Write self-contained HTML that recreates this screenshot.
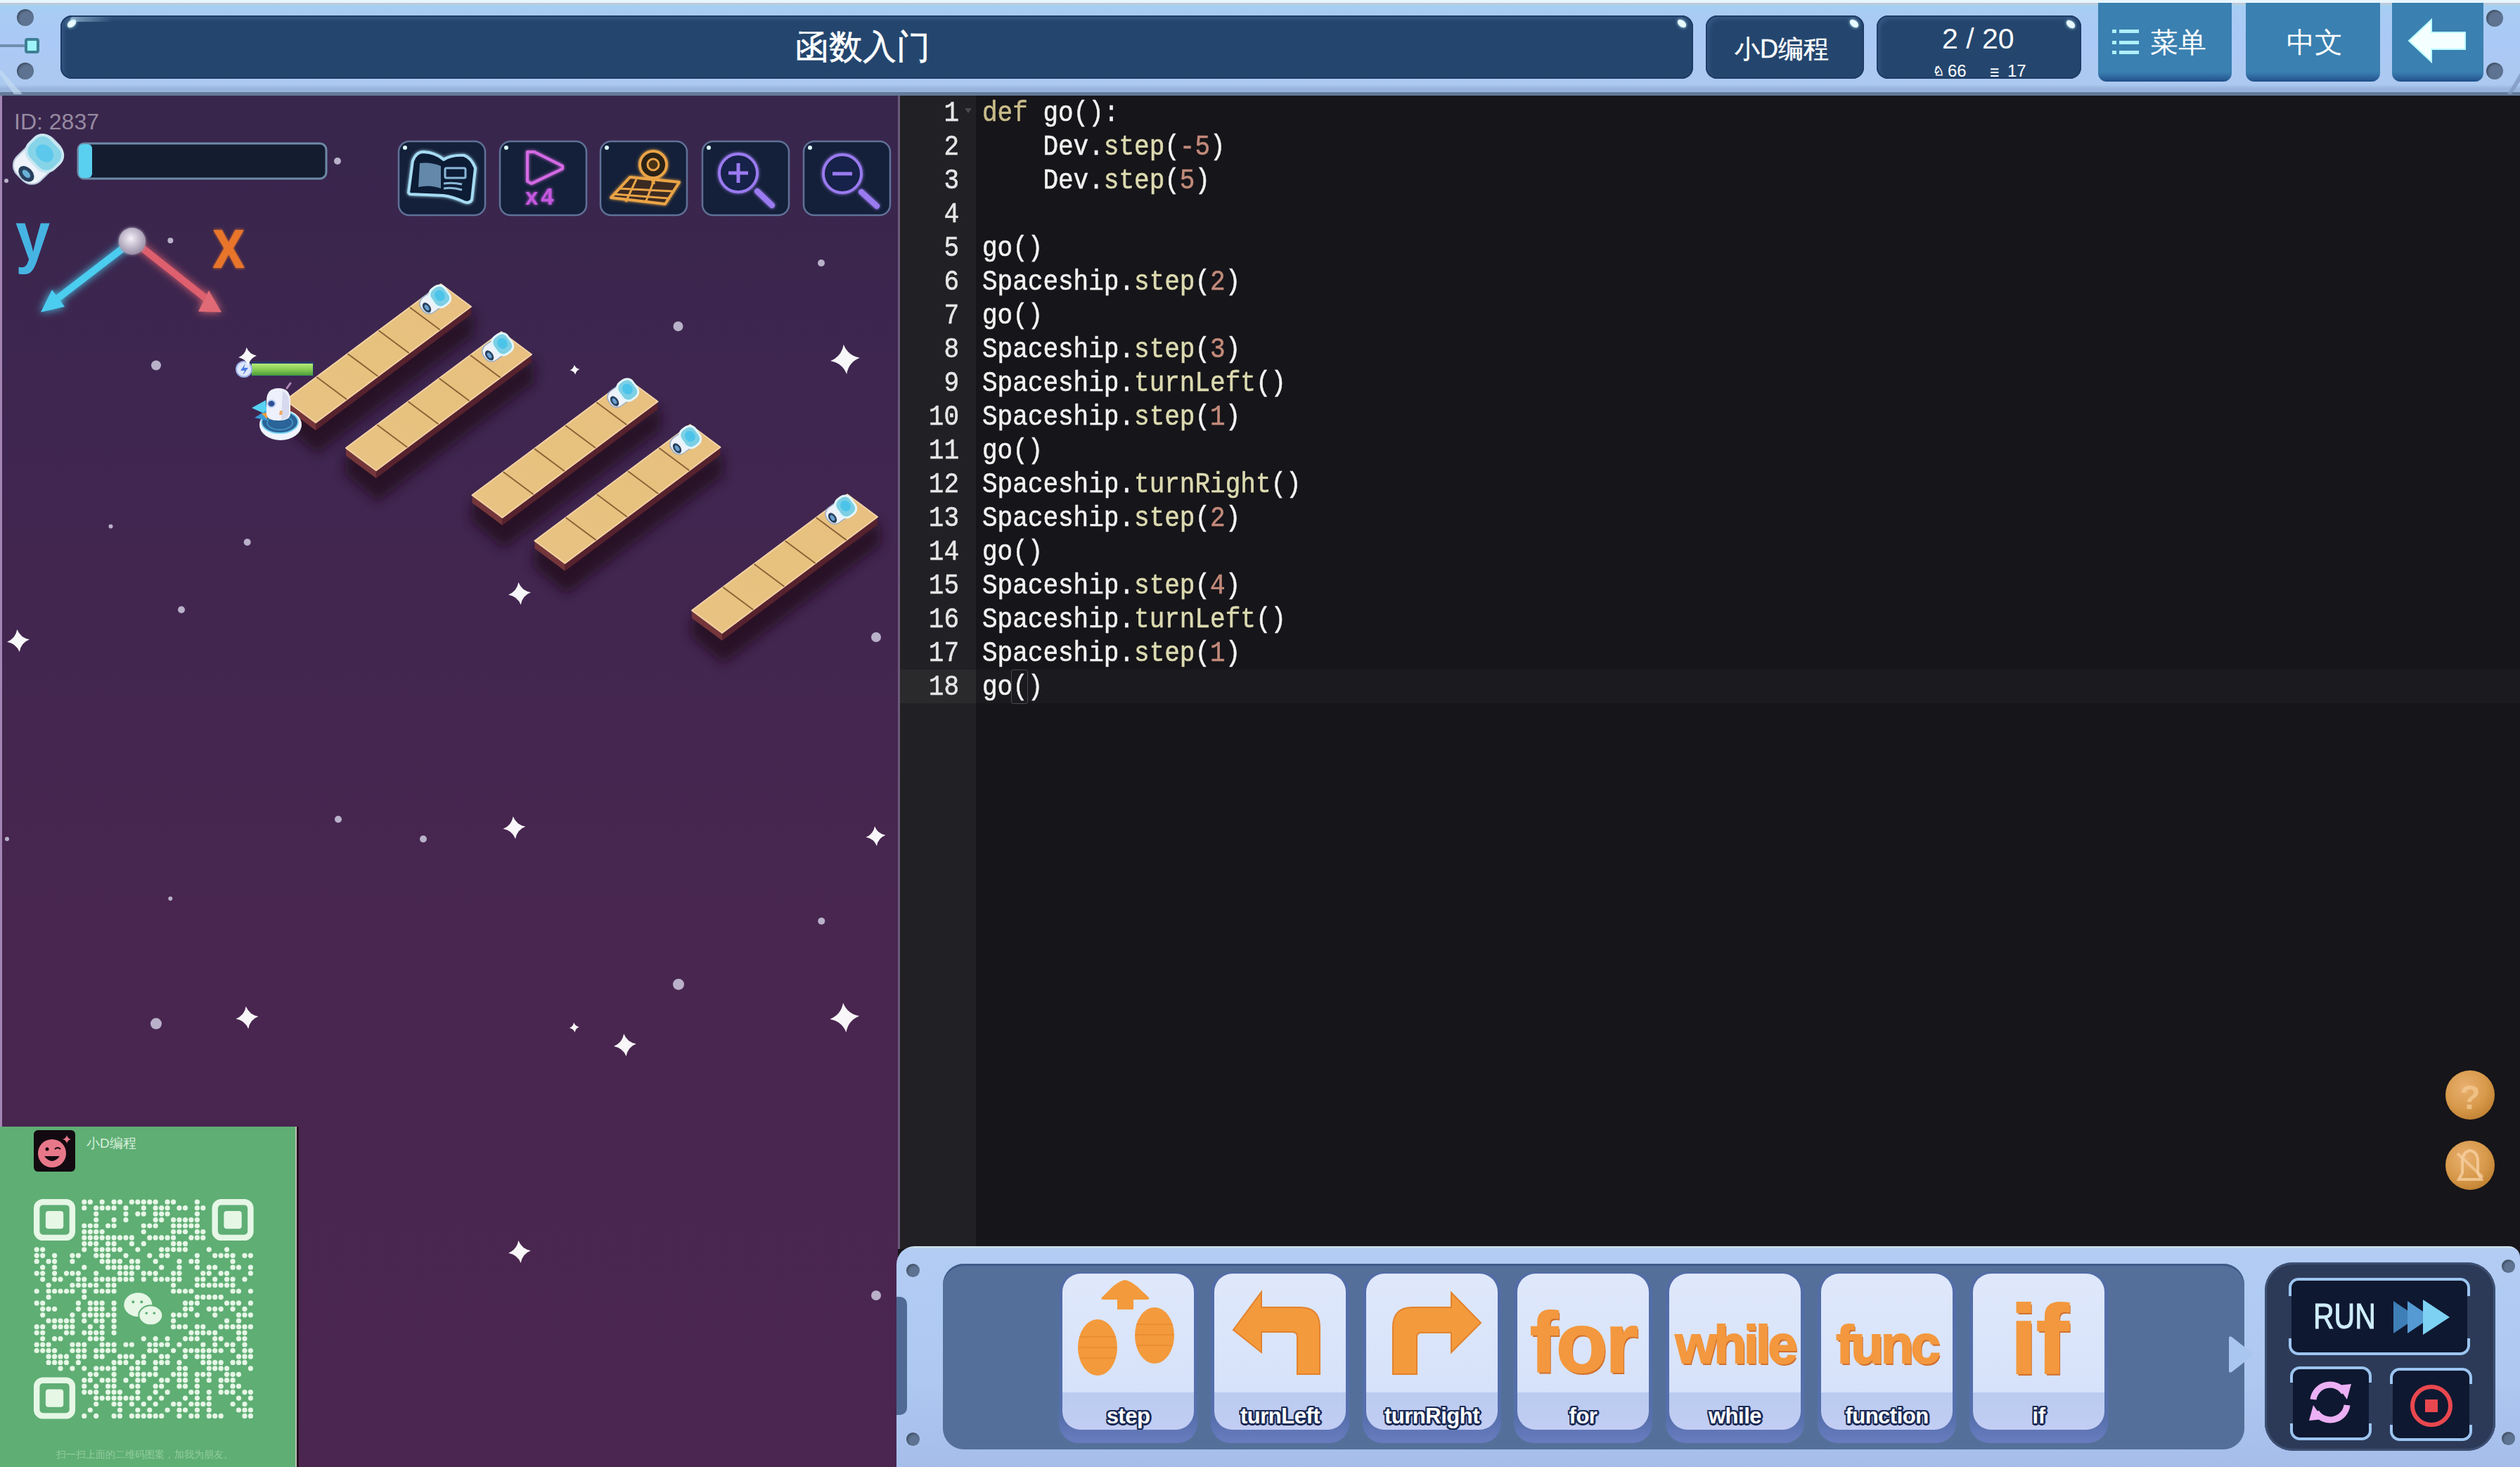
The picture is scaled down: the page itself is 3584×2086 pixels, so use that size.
<!DOCTYPE html>
<html><head><meta charset="utf-8"><title>函数入门</title>
<style>
*{margin:0;padding:0;box-sizing:border-box}
html,body{width:3584px;height:2086px;overflow:hidden;background:#161519;font-family:"Liberation Sans",sans-serif;position:relative}
.a{position:absolute}
/* top bar */
#top{left:0;top:0;width:3584px;height:136px;background:linear-gradient(#e8f6fe 0,#e8f6fe 4px,#bccbd8 4px,#bccbd8 7px,#a4d0f2 7px,#a8ccf4 16px,#abc9f6 60px,#acc9f0 120px,#98b4dc 126px,#98b4dc 131px,#647a98 131px,#647a98 136px)}
.dbox{background:#24466e;border-radius:16px;box-shadow:inset 0 0 0 2px #1f3c66,inset 4px 4px 6px rgba(120,150,220,.25);color:#fff}
.bbtn{background:linear-gradient(#3a80b0 0,#3a80b0 88%,#2a6098 96%,#1e4f88 100%);border-radius:0 0 12px 12px;color:#fff}
.gl{position:absolute;width:14px;height:9px;border-radius:50%;background:#e8fbff;transform:rotate(-40deg);box-shadow:0 0 4px #bfefff}
.dot{border-radius:50%;background:#5d7391;box-shadow:inset 2px 2px 3px rgba(0,0,0,.3)}
/* game */
#game{left:0;top:136px;width:1277px;height:1950px;background:linear-gradient(#38264c 0,#3e2650 400px,#48264f 1200px,#4a2650 1950px);overflow:hidden}
#gutter{left:1277px;top:136px;width:111px;height:1640px;background:#212024;border-left:3px solid #6a5a7a}
#code{left:1388px;top:136px;width:2196px;height:1640px;background:#161519}
.ln{position:absolute;left:1280px;width:84px;text-align:right;font-family:"Liberation Mono",monospace;font-size:36px;line-height:48px;color:#e6e6e6;transform:scaleY(1.15);transform-origin:0 0;-webkit-text-stroke:0.5px #e6e6e6}
.cl{position:absolute;left:1397px;font-family:"Liberation Mono",monospace;font-size:36px;line-height:48px;color:#f2f2f2;white-space:pre;transform:scaleY(1.15);transform-origin:0 0;-webkit-text-stroke:0.5px currentColor}
.k{color:#c9bb8a}.m{color:#dcdab0}.n{color:#c28a7a}
/* toolbar */
#tb{left:1275px;top:1772px;width:2309px;height:314px;background:linear-gradient(#c8dcea 0,#c8dcea 3px,#b2ccf3 3px,#aec8f2 60%,#a6bdea 100%);border-radius:26px 16px 0 0}
#tbin{left:1341px;top:1797px;width:1851px;height:264px;background:#54709a;border-radius:30px;box-shadow:inset 0 3px 0 #3e5a88}
.card{position:absolute;top:1809px;width:197px;height:243px;border-radius:28px;background:linear-gradient(#526ca6 0,#5670ac 85%,#6a7cc0 100%)}
.face{position:absolute;left:5px;top:2px;width:187px;height:222px;border-radius:26px;background:linear-gradient(#dfe8fb 0,#d6e2fa 169px,#b9cbef 169px,#c3cdf4 100%);overflow:hidden}
.lbl{position:absolute;left:0;width:100%;top:183px;text-align:center;font-weight:bold;font-size:31px;line-height:40px;color:#fff;letter-spacing:-0.5px;
 text-shadow:-2px -2px 0 #1a2a55,2px -2px 0 #1a2a55,-2px 2px 0 #1a2a55,2px 2px 0 #1a2a55,0 3px 0 #1a2a55,0 -2px 0 #1a2a55,3px 0 0 #1a2a55,-2px 0 0 #1a2a55}
.big{position:absolute;left:0;width:100%;text-align:center;font-weight:bold;color:#f3983e;text-shadow:2px 3px 0 #d0702e;-webkit-text-stroke:2px #f3983e}
.face svg{position:absolute;left:0;top:0}
.brk{position:absolute;border:4px solid #9cc4f0;border-radius:14px}
.brk .in{position:absolute;left:0;top:0;right:0;bottom:0;background:#0e1830;border-radius:10px}
.gap{position:absolute;background:#2c3a58;width:10px}
@media (max-width:1800px){html{zoom:0.5}}
</style></head><body>

<div id="top" class="a"></div>
<!-- left connector -->
<svg class="a" style="left:0;top:100px" width="40" height="36" viewBox="0 0 40 36"><path d="M0 6 L20 34 L32 34 L0 -2 Z" fill="#c8e0f4" opacity=".6"/></svg>
<div class="a dot" style="left:24px;top:13px;width:24px;height:24px"></div>
<div class="a dot" style="left:24px;top:89px;width:24px;height:24px"></div>
<div class="a" style="left:0;top:63px;width:36px;height:4px;background:#6f8fae"></div>
<div class="a" style="left:35px;top:54px;width:21px;height:22px;border-radius:4px;background:#9ff4fb;border:4px solid #3f7f95"></div>

<div class="a dbox" style="left:86px;top:22px;width:2322px;height:90px"></div><div class="gl" style="left:95px;top:29px"></div><div class="a" style="left:100px;top:24px;width:60px;height:7px;border-radius:4px;background:linear-gradient(90deg,rgba(200,235,255,.55),rgba(200,235,255,0))"></div><div class="gl" style="left:2385px;top:29px;transform:rotate(40deg)"></div>
<div class="a" style="left:1131px;top:37px;font-size:48px;line-height:60px;color:#fff;-webkit-text-stroke:0.6px #fff">函数入门</div>

<div class="a dbox" style="left:2426px;top:22px;width:225px;height:90px"></div><div class="gl" style="left:2630px;top:29px;transform:rotate(40deg)"></div>
<div class="a" style="left:2467px;top:46px;font-size:36px;line-height:48px;color:#fff;-webkit-text-stroke:0.4px #fff">小D编程</div>

<div class="a dbox" style="left:2669px;top:22px;width:291px;height:90px"></div><div class="gl" style="left:2938px;top:30px;transform:rotate(40deg)"></div>
<div class="a" style="left:2762px;top:30px;font-size:41px;line-height:50px;color:#fff">2 / 20</div>
<div class="a" style="left:2749px;top:88px;font-size:18px;line-height:26px;color:#fff;-webkit-text-stroke:0.8px #fff">♘</div><div class="a" style="left:2770px;top:88px;font-size:24px;line-height:26px;color:#fff">66</div>
<div class="a" style="left:2829px;top:90px;font-size:27px;line-height:26px;color:#fff;transform:scaleX(0.85)">≡</div><div class="a" style="left:2855px;top:88px;font-size:24px;line-height:26px;color:#fff">17</div>

<div class="a bbtn" style="left:2984px;top:4px;width:190px;height:112px"></div>
<div class="a" style="left:3004px;top:42px;width:38px;height:36px">
 <div class="a" style="left:0;top:0;width:6px;height:5px;background:#aef0ff"></div><div class="a" style="left:10px;top:0;width:28px;height:5px;background:#aef0ff"></div>
 <div class="a" style="left:0;top:16px;width:6px;height:5px;background:#aef0ff"></div><div class="a" style="left:10px;top:16px;width:28px;height:5px;background:#aef0ff"></div>
 <div class="a" style="left:0;top:30px;width:6px;height:5px;background:#aef0ff"></div><div class="a" style="left:10px;top:30px;width:28px;height:5px;background:#aef0ff"></div>
</div>
<div class="a" style="left:3058px;top:36px;font-size:40px;line-height:48px;color:#fff">菜单</div>

<div class="a bbtn" style="left:3194px;top:4px;width:191px;height:112px"></div>
<div class="a" style="left:3252px;top:36px;font-size:40px;line-height:48px;color:#fff">中文</div>

<div class="a bbtn" style="left:3402px;top:4px;width:130px;height:112px"></div>
<svg class="a" style="left:3420px;top:24px" width="96" height="70" viewBox="0 0 96 70"><path d="M6 34 L38 4 L38 22 L86 22 L86 46 L38 46 L38 64 Z" fill="#f4ffff" stroke="#bff" stroke-width="2"/></svg>
<svg class="a" style="left:3560px;top:100px" width="24" height="36" viewBox="0 0 24 36"><path d="M24 4 L6 34 L12 34 L24 16 Z" fill="#7f98c0" opacity=".8"/></svg>
<div class="a dot" style="left:3536px;top:14px;width:24px;height:24px"></div>
<div class="a dot" style="left:3536px;top:89px;width:24px;height:24px"></div>

<!-- game panel -->
<svg class="a" style="left:0;top:136px" width="1277" height="1950" viewBox="0 136 1277 1950">
<defs>
<linearGradient id="bgp" x1="0" y1="0" x2="0" y2="1"><stop offset="0" stop-color="#38264c"/><stop offset=".25" stop-color="#3f2650"/><stop offset=".6" stop-color="#48264f"/><stop offset="1" stop-color="#4a2650"/></linearGradient>
<linearGradient id="tile" x1="0" y1="1" x2="1" y2="0"><stop offset="0" stop-color="#e8c282"/><stop offset=".5" stop-color="#e6c27e"/><stop offset="1" stop-color="#e9bf80"/></linearGradient>
<filter id="blur8" x="-50%" y="-50%" width="200%" height="200%"><feGaussianBlur stdDeviation="8"/></filter>
<filter id="glow" x="-50%" y="-50%" width="200%" height="200%"><feGaussianBlur stdDeviation="6" result="b"/><feMerge><feMergeNode in="b"/><feMergeNode in="SourceGraphic"/></feMerge></filter>
<filter id="glow2" x="-50%" y="-50%" width="200%" height="200%"><feGaussianBlur stdDeviation="2" result="b"/><feMerge><feMergeNode in="b"/><feMergeNode in="SourceGraphic"/></feMerge></filter>
<radialGradient id="ball" cx=".45" cy=".4" r=".6"><stop offset="0" stop-color="#f4f0f8"/><stop offset="1" stop-color="#9a90a8"/></radialGradient>
<linearGradient id="hp" x1="0" y1="0" x2="0" y2="1"><stop offset="0" stop-color="#b4ea78"/><stop offset=".5" stop-color="#86cc52"/><stop offset="1" stop-color="#4a9a3e"/></linearGradient>
</defs>
<rect x="0" y="136" width="1277" height="1950" fill="url(#bgp)"/>
<rect x="0" y="136" width="3" height="1466" fill="#a486b4"/>
<circle cx="1168" cy="374" r="5" fill="#b9b1c9"/>
<circle cx="964.5" cy="464" r="7" fill="#b9b1c9"/>
<circle cx="222" cy="519.5" r="7" fill="#b9b1c9"/>
<circle cx="242.4" cy="342" r="4" fill="#b9b1c9"/>
<circle cx="157.5" cy="748.6" r="3" fill="#b9b1c9"/>
<circle cx="351.7" cy="771" r="5" fill="#b9b1c9"/>
<circle cx="258" cy="867" r="5" fill="#b9b1c9"/>
<circle cx="1246" cy="906" r="7" fill="#b9b1c9"/>
<circle cx="480" cy="229" r="5" fill="#b9b1c9"/>
<circle cx="481" cy="1165" r="5" fill="#b9b1c9"/>
<circle cx="602" cy="1193" r="5" fill="#b9b1c9"/>
<circle cx="10" cy="1193" r="3" fill="#b9b1c9"/>
<circle cx="242.3" cy="1277.8" r="3" fill="#b9b1c9"/>
<circle cx="1168.3" cy="1309.8" r="5" fill="#b9b1c9"/>
<circle cx="965" cy="1399.7" r="8" fill="#b9b1c9"/>
<circle cx="222" cy="1455.6" r="8" fill="#b9b1c9"/>
<circle cx="1246" cy="1842" r="7" fill="#b9b1c9"/>
<circle cx="9" cy="257" r="3" fill="#b9b1c9"/>
<path transform="rotate(-6 1202 511)" d="M1202 490 Q1206.62 506.38 1223 511 Q1206.62 515.62 1202 532 Q1197.38 515.62 1181 511 Q1197.38 506.38 1202 490Z" fill="#fff" fill-opacity=".96"/>
<path transform="rotate(-6 739 844)" d="M739 828 Q742.52 840.48 755 844 Q742.52 847.52 739 860 Q735.48 847.52 723 844 Q735.48 840.48 739 828Z" fill="#fff" fill-opacity=".96"/>
<path transform="rotate(-6 26 911)" d="M26 895 Q29.52 907.48 42 911 Q29.52 914.52 26 927 Q22.48 914.52 10 911 Q22.48 907.48 26 895Z" fill="#fff" fill-opacity=".96"/>
<path transform="rotate(-6 731.4 1176.8)" d="M731.4 1160.8 Q734.92 1173.28 747.4 1176.8 Q734.92 1180.32 731.4 1192.8 Q727.88 1180.32 715.4 1176.8 Q727.88 1173.28 731.4 1160.8Z" fill="#fff" fill-opacity=".96"/>
<path transform="rotate(-6 1245.5 1189)" d="M1245.5 1175 Q1248.58 1185.92 1259.5 1189 Q1248.58 1192.08 1245.5 1203 Q1242.42 1192.08 1231.5 1189 Q1242.42 1185.92 1245.5 1175Z" fill="#fff" fill-opacity=".96"/>
<path transform="rotate(-6 351.5 1447)" d="M351.5 1431 Q355.02 1443.48 367.5 1447 Q355.02 1450.52 351.5 1463 Q347.98 1450.52 335.5 1447 Q347.98 1443.48 351.5 1431Z" fill="#fff" fill-opacity=".96"/>
<path transform="rotate(-6 1201.3 1447)" d="M1201.3 1426 Q1205.9199999999998 1442.38 1222.3 1447 Q1205.9199999999998 1451.62 1201.3 1468 Q1196.68 1451.62 1180.3 1447 Q1196.68 1442.38 1201.3 1426Z" fill="#fff" fill-opacity=".96"/>
<path transform="rotate(-6 888.9 1486)" d="M888.9 1470 Q892.42 1482.48 904.9 1486 Q892.42 1489.52 888.9 1502 Q885.38 1489.52 872.9 1486 Q885.38 1482.48 888.9 1470Z" fill="#fff" fill-opacity=".96"/>
<path transform="rotate(-6 739 1780)" d="M739 1764 Q742.52 1776.48 755 1780 Q742.52 1783.52 739 1796 Q735.48 1783.52 723 1780 Q735.48 1776.48 739 1764Z" fill="#fff" fill-opacity=".96"/>
<path transform="rotate(-6 817.5 525.7)" d="M817.5 518.7 Q819.04 524.1600000000001 824.5 525.7 Q819.04 527.24 817.5 532.7 Q815.96 527.24 810.5 525.7 Q815.96 524.1600000000001 817.5 518.7Z" fill="#fff" fill-opacity=".96"/>
<path transform="rotate(-6 816.8 1461)" d="M816.8 1454 Q818.3399999999999 1459.46 823.8 1461 Q818.3399999999999 1462.54 816.8 1468 Q815.26 1462.54 809.8 1461 Q815.26 1459.46 816.8 1454Z" fill="#fff" fill-opacity=".96"/>
<text x="20" y="184" font-family="Liberation Sans" font-size="32" fill="#978aa2">ID: 2837</text>
<rect x="111" y="204" width="353" height="50" rx="9" fill="#141c30" stroke="#6d8aa6" stroke-width="3"/>
<rect x="112" y="205" width="19" height="48" rx="6" fill="#5ad0f0"/>
<g transform="translate(54,227) rotate(-44)">
<rect x="-36" y="-24" width="72" height="48" rx="18" fill="#eef2fa" stroke="#b8c8dc" stroke-width="2"/>
<rect x="-8" y="-25" width="42" height="50" rx="16" fill="#86d4e8" stroke="#c8e6f0" stroke-width="4"/><ellipse cx="13" cy="0" rx="11" ry="14" fill="#5cc8ec"/>
<ellipse cx="-26" cy="3" rx="9" ry="13" fill="#28405e"/><ellipse cx="-26" cy="3" rx="4" ry="7" fill="#6ab0d8"/>
</g>
<rect x="567" y="201" width="123" height="105" rx="15" fill="#142039" stroke="#5f7197" stroke-width="2.5"/>
<circle cx="576" cy="210" r="3" fill="#dff"/>
<rect x="711" y="201" width="123" height="105" rx="15" fill="#142039" stroke="#5f7197" stroke-width="2.5"/>
<circle cx="720" cy="210" r="3" fill="#dff"/>
<rect x="854" y="201" width="123" height="105" rx="15" fill="#142039" stroke="#5f7197" stroke-width="2.5"/>
<circle cx="863" cy="210" r="3" fill="#dff"/>
<rect x="999" y="201" width="123" height="105" rx="15" fill="#142039" stroke="#5f7197" stroke-width="2.5"/>
<circle cx="1008" cy="210" r="3" fill="#dff"/>
<rect x="1143" y="201" width="123" height="105" rx="15" fill="#142039" stroke="#5f7197" stroke-width="2.5"/>
<circle cx="1152" cy="210" r="3" fill="#dff"/>
<g filter="url(#glow2)"><path d="M581 274 L587 229 Q592 216 602 216 Q620 217 631 227 Q642 220 660 221 Q670 224 676 239 L671 284 Q668 290 660 287 Q645 280 631 278 L583 276 Z" fill="#0e1a34" stroke="#a6dcf4" stroke-width="4" stroke-linejoin="round"/>
<path d="M597 232 Q612 230 627 236 L627 268 Q612 262 595 266 Z" fill="#6488aa"/>
<rect x="633" y="239" width="29" height="14" rx="2" fill="none" stroke="#8ab8d8" stroke-width="3"/>
<path d="M631 261 Q644 259 657 262 M631 268 Q644 266 657 270" stroke="#8ab8d8" stroke-width="3" fill="none"/></g>
<g filter="url(#glow2)"><path d="M750 216 L760 216 L800 236 L800 240 L756 261 L750 258 Z" fill="none" stroke="#d66ae6" stroke-width="4" stroke-linejoin="round"/>
<text x="747" y="291" font-family="Liberation Sans" font-weight="bold" font-size="33" letter-spacing="4" fill="#c558e0">x4</text></g>
<g filter="url(#glow2)"><path d="M869 281 L896 252 L966 259 L946 290 Z" fill="#3a2a20" stroke="#eaa446" stroke-width="4" stroke-linejoin="round"/>
<path d="M880 268 L957 272 M873 276 L950 282 M905 255 L890 287 M930 257 L918 288" stroke="#eaa446" stroke-width="3"/>
<circle cx="929" cy="234" r="19" fill="#2a2018" stroke="#eaa446" stroke-width="4"/><circle cx="929" cy="234" r="8" fill="#4a3018" stroke="#eaa446" stroke-width="3"/>
<path d="M929 253 L929 262" stroke="#eaa446" stroke-width="5"/></g>
<g filter="url(#glow2)" stroke="#9a7af0" fill="none"><circle cx="1050" cy="246" r="27" stroke-width="4" fill="#18204a"/><path d="M1036 246 H1064 M1050 232 V260" stroke-width="5"/><path d="M1077 272 L1098 292" stroke-width="8" stroke-linecap="round"/>
<circle cx="1198" cy="247" r="27" stroke-width="4" fill="#18204a"/><path d="M1184 247 H1212" stroke-width="5"/><path d="M1225 273 L1247 293" stroke-width="8" stroke-linecap="round"/></g>
<g filter="url(#glow)"><path d="M189 342 L72 432" stroke="#4ccdf0" stroke-width="10"/><path d="M58 444 L74 412 L92 436 Z" fill="#4ccdf0"/>
<path d="M194 346 L300 430" stroke="#de5f6e" stroke-width="10"/><path d="M315 444 L282 443 L297 413 Z" fill="#e06a74"/></g>
<circle cx="188" cy="343" r="19" fill="url(#ball)" filter="url(#glow2)"/>
<text transform="translate(22,370) scale(0.9,1)" font-family="Liberation Sans" font-weight="bold" font-size="98" fill="#46b4e2">y</text>
<text transform="translate(302,381) scale(0.82,1)" font-family="Liberation Sans" font-weight="bold" font-size="102" fill="#e8742c" filter="url(#glow2)">x</text>
<polygon points="406.0,579.0 674.0,442.0 674.0,476.0 451.0,645.0 404.0,605.0" fill="#240a1a" opacity=".8" filter="url(#blur8)"/>
<polygon points="406.0,569.0 449.0,601.0 449.0,612.0 406.0,580.0" fill="#74363a"/>
<polygon points="449.0,601.0 670.0,436.0 670.0,447.0 449.0,612.0" fill="#56222e"/>
<polygon points="406.0,569.0 627.0,404.0 670.0,436.0 449.0,601.0" fill="url(#tile)" stroke="#f3d3a6" stroke-width="2" stroke-linejoin="round"/>
<line x1="450.2" y1="536.0" x2="493.2" y2="568.0" stroke="#8a6236" stroke-width="2"/>
<line x1="494.4" y1="503.0" x2="537.4" y2="535.0" stroke="#8a6236" stroke-width="2"/>
<line x1="538.6" y1="470.0" x2="581.6" y2="502.0" stroke="#8a6236" stroke-width="2"/>
<line x1="582.8" y1="437.0" x2="625.8" y2="469.0" stroke="#8a6236" stroke-width="2"/>
<polygon points="492.0,647.0 760.0,510.0 760.0,544.0 537.0,713.0 490.0,673.0" fill="#240a1a" opacity=".8" filter="url(#blur8)"/>
<polygon points="492.0,637.0 535.0,669.0 535.0,680.0 492.0,648.0" fill="#74363a"/>
<polygon points="535.0,669.0 756.0,504.0 756.0,515.0 535.0,680.0" fill="#56222e"/>
<polygon points="492.0,637.0 713.0,472.0 756.0,504.0 535.0,669.0" fill="url(#tile)" stroke="#f3d3a6" stroke-width="2" stroke-linejoin="round"/>
<line x1="536.2" y1="604.0" x2="579.2" y2="636.0" stroke="#8a6236" stroke-width="2"/>
<line x1="580.4" y1="571.0" x2="623.4" y2="603.0" stroke="#8a6236" stroke-width="2"/>
<line x1="624.6" y1="538.0" x2="667.6" y2="570.0" stroke="#8a6236" stroke-width="2"/>
<line x1="668.8" y1="505.0" x2="711.8" y2="537.0" stroke="#8a6236" stroke-width="2"/>
<polygon points="671.5,714.0 939.5,577.0 939.5,611.0 716.5,780.0 669.5,740.0" fill="#240a1a" opacity=".8" filter="url(#blur8)"/>
<polygon points="671.5,704.0 714.5,736.0 714.5,747.0 671.5,715.0" fill="#74363a"/>
<polygon points="714.5,736.0 935.5,571.0 935.5,582.0 714.5,747.0" fill="#56222e"/>
<polygon points="671.5,704.0 892.5,539.0 935.5,571.0 714.5,736.0" fill="url(#tile)" stroke="#f3d3a6" stroke-width="2" stroke-linejoin="round"/>
<line x1="715.7" y1="671.0" x2="758.7" y2="703.0" stroke="#8a6236" stroke-width="2"/>
<line x1="759.9" y1="638.0" x2="802.9" y2="670.0" stroke="#8a6236" stroke-width="2"/>
<line x1="804.1" y1="605.0" x2="847.1" y2="637.0" stroke="#8a6236" stroke-width="2"/>
<line x1="848.3" y1="572.0" x2="891.3" y2="604.0" stroke="#8a6236" stroke-width="2"/>
<polygon points="760.5,779.0 1028.5,642.0 1028.5,676.0 805.5,845.0 758.5,805.0" fill="#240a1a" opacity=".8" filter="url(#blur8)"/>
<polygon points="760.5,769.0 803.5,801.0 803.5,812.0 760.5,780.0" fill="#74363a"/>
<polygon points="803.5,801.0 1024.5,636.0 1024.5,647.0 803.5,812.0" fill="#56222e"/>
<polygon points="760.5,769.0 981.5,604.0 1024.5,636.0 803.5,801.0" fill="url(#tile)" stroke="#f3d3a6" stroke-width="2" stroke-linejoin="round"/>
<line x1="804.7" y1="736.0" x2="847.7" y2="768.0" stroke="#8a6236" stroke-width="2"/>
<line x1="848.9" y1="703.0" x2="891.9" y2="735.0" stroke="#8a6236" stroke-width="2"/>
<line x1="893.1" y1="670.0" x2="936.1" y2="702.0" stroke="#8a6236" stroke-width="2"/>
<line x1="937.3" y1="637.0" x2="980.3" y2="669.0" stroke="#8a6236" stroke-width="2"/>
<polygon points="984.0,878.0 1252.0,741.0 1252.0,775.0 1029.0,944.0 982.0,904.0" fill="#240a1a" opacity=".8" filter="url(#blur8)"/>
<polygon points="984.0,868.0 1027.0,900.0 1027.0,911.0 984.0,879.0" fill="#74363a"/>
<polygon points="1027.0,900.0 1248.0,735.0 1248.0,746.0 1027.0,911.0" fill="#56222e"/>
<polygon points="984.0,868.0 1205.0,703.0 1248.0,735.0 1027.0,900.0" fill="url(#tile)" stroke="#f3d3a6" stroke-width="2" stroke-linejoin="round"/>
<line x1="1028.2" y1="835.0" x2="1071.2" y2="867.0" stroke="#8a6236" stroke-width="2"/>
<line x1="1072.4" y1="802.0" x2="1115.4" y2="834.0" stroke="#8a6236" stroke-width="2"/>
<line x1="1116.6" y1="769.0" x2="1159.6" y2="801.0" stroke="#8a6236" stroke-width="2"/>
<line x1="1160.8" y1="736.0" x2="1203.8" y2="768.0" stroke="#8a6236" stroke-width="2"/>
<g transform="translate(618,427) rotate(-36)">
<rect x="-22" y="-13" width="44" height="26" rx="11" fill="#eef2fa" stroke="#9ab0c8" stroke-width="1.5"/>
<rect x="-3" y="-15" width="25" height="30" rx="10" fill="#7ccfe4" stroke="#e2f6fb" stroke-width="3"/><ellipse cx="10" cy="-1" rx="7" ry="8" fill="#4cc4ea"/>
<ellipse cx="-15" cy="2" rx="5" ry="8" fill="#28405e"/><ellipse cx="-15" cy="2" rx="2.5" ry="4.5" fill="#6aa0d0"/>
</g>
<g transform="translate(707,495) rotate(-36)">
<rect x="-22" y="-13" width="44" height="26" rx="11" fill="#eef2fa" stroke="#9ab0c8" stroke-width="1.5"/>
<rect x="-3" y="-15" width="25" height="30" rx="10" fill="#7ccfe4" stroke="#e2f6fb" stroke-width="3"/><ellipse cx="10" cy="-1" rx="7" ry="8" fill="#4cc4ea"/>
<ellipse cx="-15" cy="2" rx="5" ry="8" fill="#28405e"/><ellipse cx="-15" cy="2" rx="2.5" ry="4.5" fill="#6aa0d0"/>
</g>
<g transform="translate(885,560) rotate(-36)">
<rect x="-22" y="-13" width="44" height="26" rx="11" fill="#eef2fa" stroke="#9ab0c8" stroke-width="1.5"/>
<rect x="-3" y="-15" width="25" height="30" rx="10" fill="#7ccfe4" stroke="#e2f6fb" stroke-width="3"/><ellipse cx="10" cy="-1" rx="7" ry="8" fill="#4cc4ea"/>
<ellipse cx="-15" cy="2" rx="5" ry="8" fill="#28405e"/><ellipse cx="-15" cy="2" rx="2.5" ry="4.5" fill="#6aa0d0"/>
</g>
<g transform="translate(974,627) rotate(-36)">
<rect x="-22" y="-13" width="44" height="26" rx="11" fill="#eef2fa" stroke="#9ab0c8" stroke-width="1.5"/>
<rect x="-3" y="-15" width="25" height="30" rx="10" fill="#7ccfe4" stroke="#e2f6fb" stroke-width="3"/><ellipse cx="10" cy="-1" rx="7" ry="8" fill="#4cc4ea"/>
<ellipse cx="-15" cy="2" rx="5" ry="8" fill="#28405e"/><ellipse cx="-15" cy="2" rx="2.5" ry="4.5" fill="#6aa0d0"/>
</g>
<g transform="translate(1195,726) rotate(-36)">
<rect x="-22" y="-13" width="44" height="26" rx="11" fill="#eef2fa" stroke="#9ab0c8" stroke-width="1.5"/>
<rect x="-3" y="-15" width="25" height="30" rx="10" fill="#7ccfe4" stroke="#e2f6fb" stroke-width="3"/><ellipse cx="10" cy="-1" rx="7" ry="8" fill="#4cc4ea"/>
<ellipse cx="-15" cy="2" rx="5" ry="8" fill="#28405e"/><ellipse cx="-15" cy="2" rx="2.5" ry="4.5" fill="#6aa0d0"/>
</g>
<g>
<ellipse cx="399" cy="604" rx="30" ry="22" fill="#f0f4ff"/>
<ellipse cx="398" cy="600" rx="26" ry="16" fill="#2a6498" stroke="#7ad4f4" stroke-width="2"/>
<ellipse cx="398" cy="601" rx="18" ry="10" fill="none" stroke="#5ab0e0" stroke-width="1.5" opacity=".7"/>
<path d="M358 580 L378 569 L380 590 Z" fill="#58d2f2"/><path d="M362 594 L378 584 L380 598 Z" fill="#3a9ad8"/>
<path d="M372 588 L382 586 L380 596 Z" fill="#e8a040"/>
<path d="M379 570 Q379 552 396 552 Q413 552 413 570 L413 588 Q413 598 396 598 Q379 598 379 588 Z" fill="#eef0fb"/>
<path d="M402 556 Q411 560 411 572 L411 588 Q409 596 400 597 Z" fill="#c8cce8" opacity=".6"/>
<ellipse cx="386" cy="574" rx="5.5" ry="5" fill="#2f4f96" stroke="#b6d0f4" stroke-width="2"/>
<path d="M398 584 L402 584 L401 590 L397 590 Z" fill="#f0a860"/>
<path d="M408 552 L413 545" stroke="#b08ab8" stroke-width="3" stroke-linecap="round"/>
</g>
<rect x="357" y="514" width="89" height="21" fill="#2a3a6a"/><rect x="358" y="517" width="87" height="17" fill="url(#hp)"/>
<circle cx="347" cy="525" r="11" fill="#dfe6fb" stroke="#9ab0e8" stroke-width="2"/><path d="M349 517 L342 527 L348 527 L345 534 L353 523 L347 523 Z" fill="#4a7ae0"/>
<path transform="rotate(-6 352 507)" d="M352 494 Q354.86 504.14 365 507 Q354.86 509.86 352 520 Q349.14 509.86 339 507 Q349.14 504.14 352 494Z" fill="#fff" fill-opacity=".96"/>
</svg>
<div class="a" style="left:0;top:1602px;width:422px;height:484px;background:#5fae74;border-right:2px solid #b8c0b8"></div>
<div class="a" style="left:422px;top:1602px;width:3px;height:484px;background:#2a1020"></div>
<svg class="a" style="left:0;top:1602px" width="422" height="484" viewBox="0 1602 422 484">
<rect x="48" y="1607" width="59" height="59" rx="6" fill="#120a10"/><circle cx="74" cy="1640" r="20" fill="#e7788a"/><path d="M63 1644 Q74 1658 85 1644 Z" fill="#120a10"/><circle cx="67" cy="1634" r="2.5" fill="#120a10"/><path d="M78 1634 Q82 1630 86 1634" stroke="#120a10" stroke-width="2" fill="none"/><path d="M95 1614 Q96 1619 101 1620 Q96 1621 95 1626 Q94 1621 89 1620 Q94 1619 95 1614Z" fill="#e7788a"/>
<text x="123" y="1632" font-family="Liberation Sans" font-size="19" fill="#d8efdc">小D编程</text>
<rect x="52.2" y="1709.2" width="50.7" height="50.7" rx="9" fill="none" stroke="#e6f7e6" stroke-width="8.4"/><rect x="64.9" y="1721.9" width="25.3" height="25.3" rx="4" fill="#e6f7e6"/>
<rect x="305.7" y="1709.2" width="50.7" height="50.7" rx="9" fill="none" stroke="#e6f7e6" stroke-width="8.4"/><rect x="318.4" y="1721.9" width="25.3" height="25.3" rx="4" fill="#e6f7e6"/>
<rect x="52.2" y="1962.7" width="50.7" height="50.7" rx="9" fill="none" stroke="#e6f7e6" stroke-width="8.4"/><rect x="64.9" y="1975.4" width="25.3" height="25.3" rx="4" fill="#e6f7e6"/>
<g fill="#e6f7e6"><circle cx="119.8" cy="1709.2" r="3.6"/><circle cx="128.3" cy="1709.2" r="3.6"/><circle cx="145.2" cy="1709.2" r="3.6"/><circle cx="162.1" cy="1709.2" r="3.6"/><circle cx="170.5" cy="1709.2" r="3.6"/><circle cx="187.4" cy="1709.2" r="3.6"/><circle cx="195.9" cy="1709.2" r="3.6"/><circle cx="204.3" cy="1709.2" r="3.6"/><circle cx="212.8" cy="1709.2" r="3.6"/><circle cx="221.2" cy="1709.2" r="3.6"/><circle cx="238.1" cy="1709.2" r="3.6"/><circle cx="246.6" cy="1709.2" r="3.6"/><circle cx="280.4" cy="1709.2" r="3.6"/><circle cx="119.8" cy="1717.7" r="3.6"/><circle cx="136.7" cy="1717.7" r="3.6"/><circle cx="145.2" cy="1717.7" r="3.6"/><circle cx="153.6" cy="1717.7" r="3.6"/><circle cx="162.1" cy="1717.7" r="3.6"/><circle cx="179.0" cy="1717.7" r="3.6"/><circle cx="204.3" cy="1717.7" r="3.6"/><circle cx="221.2" cy="1717.7" r="3.6"/><circle cx="229.7" cy="1717.7" r="3.6"/><circle cx="238.1" cy="1717.7" r="3.6"/><circle cx="255.0" cy="1717.7" r="3.6"/><circle cx="263.5" cy="1717.7" r="3.6"/><circle cx="280.4" cy="1717.7" r="3.6"/><circle cx="288.8" cy="1717.7" r="3.6"/><circle cx="136.7" cy="1726.1" r="3.6"/><circle cx="179.0" cy="1726.1" r="3.6"/><circle cx="195.9" cy="1726.1" r="3.6"/><circle cx="204.3" cy="1726.1" r="3.6"/><circle cx="221.2" cy="1726.1" r="3.6"/><circle cx="229.7" cy="1726.1" r="3.6"/><circle cx="238.1" cy="1726.1" r="3.6"/><circle cx="280.4" cy="1726.1" r="3.6"/><circle cx="136.7" cy="1734.6" r="3.6"/><circle cx="162.1" cy="1734.6" r="3.6"/><circle cx="179.0" cy="1734.6" r="3.6"/><circle cx="221.2" cy="1734.6" r="3.6"/><circle cx="229.7" cy="1734.6" r="3.6"/><circle cx="246.6" cy="1734.6" r="3.6"/><circle cx="255.0" cy="1734.6" r="3.6"/><circle cx="263.5" cy="1734.6" r="3.6"/><circle cx="271.9" cy="1734.6" r="3.6"/><circle cx="280.4" cy="1734.6" r="3.6"/><circle cx="119.8" cy="1743.0" r="3.6"/><circle cx="128.3" cy="1743.0" r="3.6"/><circle cx="136.7" cy="1743.0" r="3.6"/><circle cx="153.6" cy="1743.0" r="3.6"/><circle cx="162.1" cy="1743.0" r="3.6"/><circle cx="204.3" cy="1743.0" r="3.6"/><circle cx="212.8" cy="1743.0" r="3.6"/><circle cx="221.2" cy="1743.0" r="3.6"/><circle cx="246.6" cy="1743.0" r="3.6"/><circle cx="255.0" cy="1743.0" r="3.6"/><circle cx="263.5" cy="1743.0" r="3.6"/><circle cx="271.9" cy="1743.0" r="3.6"/><circle cx="280.4" cy="1743.0" r="3.6"/><circle cx="119.8" cy="1751.5" r="3.6"/><circle cx="128.3" cy="1751.5" r="3.6"/><circle cx="136.7" cy="1751.5" r="3.6"/><circle cx="145.2" cy="1751.5" r="3.6"/><circle cx="204.3" cy="1751.5" r="3.6"/><circle cx="246.6" cy="1751.5" r="3.6"/><circle cx="255.0" cy="1751.5" r="3.6"/><circle cx="263.5" cy="1751.5" r="3.6"/><circle cx="280.4" cy="1751.5" r="3.6"/><circle cx="288.8" cy="1751.5" r="3.6"/><circle cx="119.8" cy="1759.9" r="3.6"/><circle cx="128.3" cy="1759.9" r="3.6"/><circle cx="136.7" cy="1759.9" r="3.6"/><circle cx="145.2" cy="1759.9" r="3.6"/><circle cx="153.6" cy="1759.9" r="3.6"/><circle cx="162.1" cy="1759.9" r="3.6"/><circle cx="170.5" cy="1759.9" r="3.6"/><circle cx="179.0" cy="1759.9" r="3.6"/><circle cx="187.4" cy="1759.9" r="3.6"/><circle cx="212.8" cy="1759.9" r="3.6"/><circle cx="221.2" cy="1759.9" r="3.6"/><circle cx="229.7" cy="1759.9" r="3.6"/><circle cx="238.1" cy="1759.9" r="3.6"/><circle cx="246.6" cy="1759.9" r="3.6"/><circle cx="271.9" cy="1759.9" r="3.6"/><circle cx="280.4" cy="1759.9" r="3.6"/><circle cx="288.8" cy="1759.9" r="3.6"/><circle cx="119.8" cy="1768.4" r="3.6"/><circle cx="128.3" cy="1768.4" r="3.6"/><circle cx="136.7" cy="1768.4" r="3.6"/><circle cx="153.6" cy="1768.4" r="3.6"/><circle cx="162.1" cy="1768.4" r="3.6"/><circle cx="187.4" cy="1768.4" r="3.6"/><circle cx="204.3" cy="1768.4" r="3.6"/><circle cx="246.6" cy="1768.4" r="3.6"/><circle cx="255.0" cy="1768.4" r="3.6"/><circle cx="263.5" cy="1768.4" r="3.6"/><circle cx="52.2" cy="1776.8" r="3.6"/><circle cx="60.7" cy="1776.8" r="3.6"/><circle cx="119.8" cy="1776.8" r="3.6"/><circle cx="136.7" cy="1776.8" r="3.6"/><circle cx="145.2" cy="1776.8" r="3.6"/><circle cx="153.6" cy="1776.8" r="3.6"/><circle cx="162.1" cy="1776.8" r="3.6"/><circle cx="170.5" cy="1776.8" r="3.6"/><circle cx="195.9" cy="1776.8" r="3.6"/><circle cx="229.7" cy="1776.8" r="3.6"/><circle cx="238.1" cy="1776.8" r="3.6"/><circle cx="246.6" cy="1776.8" r="3.6"/><circle cx="255.0" cy="1776.8" r="3.6"/><circle cx="263.5" cy="1776.8" r="3.6"/><circle cx="297.3" cy="1776.8" r="3.6"/><circle cx="322.6" cy="1776.8" r="3.6"/><circle cx="52.2" cy="1785.3" r="3.6"/><circle cx="60.7" cy="1785.3" r="3.6"/><circle cx="77.6" cy="1785.3" r="3.6"/><circle cx="102.9" cy="1785.3" r="3.6"/><circle cx="111.4" cy="1785.3" r="3.6"/><circle cx="136.7" cy="1785.3" r="3.6"/><circle cx="145.2" cy="1785.3" r="3.6"/><circle cx="153.6" cy="1785.3" r="3.6"/><circle cx="179.0" cy="1785.3" r="3.6"/><circle cx="212.8" cy="1785.3" r="3.6"/><circle cx="229.7" cy="1785.3" r="3.6"/><circle cx="238.1" cy="1785.3" r="3.6"/><circle cx="280.4" cy="1785.3" r="3.6"/><circle cx="305.7" cy="1785.3" r="3.6"/><circle cx="314.2" cy="1785.3" r="3.6"/><circle cx="322.6" cy="1785.3" r="3.6"/><circle cx="331.1" cy="1785.3" r="3.6"/><circle cx="348.0" cy="1785.3" r="3.6"/><circle cx="356.4" cy="1785.3" r="3.6"/><circle cx="52.2" cy="1793.7" r="3.6"/><circle cx="69.1" cy="1793.7" r="3.6"/><circle cx="77.6" cy="1793.7" r="3.6"/><circle cx="102.9" cy="1793.7" r="3.6"/><circle cx="145.2" cy="1793.7" r="3.6"/><circle cx="153.6" cy="1793.7" r="3.6"/><circle cx="162.1" cy="1793.7" r="3.6"/><circle cx="170.5" cy="1793.7" r="3.6"/><circle cx="187.4" cy="1793.7" r="3.6"/><circle cx="195.9" cy="1793.7" r="3.6"/><circle cx="221.2" cy="1793.7" r="3.6"/><circle cx="255.0" cy="1793.7" r="3.6"/><circle cx="271.9" cy="1793.7" r="3.6"/><circle cx="280.4" cy="1793.7" r="3.6"/><circle cx="331.1" cy="1793.7" r="3.6"/><circle cx="60.7" cy="1802.2" r="3.6"/><circle cx="77.6" cy="1802.2" r="3.6"/><circle cx="119.8" cy="1802.2" r="3.6"/><circle cx="153.6" cy="1802.2" r="3.6"/><circle cx="162.1" cy="1802.2" r="3.6"/><circle cx="170.5" cy="1802.2" r="3.6"/><circle cx="179.0" cy="1802.2" r="3.6"/><circle cx="187.4" cy="1802.2" r="3.6"/><circle cx="195.9" cy="1802.2" r="3.6"/><circle cx="229.7" cy="1802.2" r="3.6"/><circle cx="255.0" cy="1802.2" r="3.6"/><circle cx="280.4" cy="1802.2" r="3.6"/><circle cx="297.3" cy="1802.2" r="3.6"/><circle cx="305.7" cy="1802.2" r="3.6"/><circle cx="331.1" cy="1802.2" r="3.6"/><circle cx="339.5" cy="1802.2" r="3.6"/><circle cx="356.4" cy="1802.2" r="3.6"/><circle cx="52.2" cy="1810.6" r="3.6"/><circle cx="60.7" cy="1810.6" r="3.6"/><circle cx="77.6" cy="1810.6" r="3.6"/><circle cx="94.5" cy="1810.6" r="3.6"/><circle cx="102.9" cy="1810.6" r="3.6"/><circle cx="111.4" cy="1810.6" r="3.6"/><circle cx="136.7" cy="1810.6" r="3.6"/><circle cx="170.5" cy="1810.6" r="3.6"/><circle cx="179.0" cy="1810.6" r="3.6"/><circle cx="187.4" cy="1810.6" r="3.6"/><circle cx="204.3" cy="1810.6" r="3.6"/><circle cx="212.8" cy="1810.6" r="3.6"/><circle cx="221.2" cy="1810.6" r="3.6"/><circle cx="246.6" cy="1810.6" r="3.6"/><circle cx="255.0" cy="1810.6" r="3.6"/><circle cx="288.8" cy="1810.6" r="3.6"/><circle cx="297.3" cy="1810.6" r="3.6"/><circle cx="314.2" cy="1810.6" r="3.6"/><circle cx="322.6" cy="1810.6" r="3.6"/><circle cx="356.4" cy="1810.6" r="3.6"/><circle cx="60.7" cy="1819.1" r="3.6"/><circle cx="77.6" cy="1819.1" r="3.6"/><circle cx="86.0" cy="1819.1" r="3.6"/><circle cx="111.4" cy="1819.1" r="3.6"/><circle cx="119.8" cy="1819.1" r="3.6"/><circle cx="136.7" cy="1819.1" r="3.6"/><circle cx="145.2" cy="1819.1" r="3.6"/><circle cx="153.6" cy="1819.1" r="3.6"/><circle cx="162.1" cy="1819.1" r="3.6"/><circle cx="170.5" cy="1819.1" r="3.6"/><circle cx="179.0" cy="1819.1" r="3.6"/><circle cx="187.4" cy="1819.1" r="3.6"/><circle cx="204.3" cy="1819.1" r="3.6"/><circle cx="221.2" cy="1819.1" r="3.6"/><circle cx="229.7" cy="1819.1" r="3.6"/><circle cx="238.1" cy="1819.1" r="3.6"/><circle cx="246.6" cy="1819.1" r="3.6"/><circle cx="255.0" cy="1819.1" r="3.6"/><circle cx="280.4" cy="1819.1" r="3.6"/><circle cx="288.8" cy="1819.1" r="3.6"/><circle cx="305.7" cy="1819.1" r="3.6"/><circle cx="322.6" cy="1819.1" r="3.6"/><circle cx="331.1" cy="1819.1" r="3.6"/><circle cx="348.0" cy="1819.1" r="3.6"/><circle cx="69.1" cy="1827.5" r="3.6"/><circle cx="102.9" cy="1827.5" r="3.6"/><circle cx="111.4" cy="1827.5" r="3.6"/><circle cx="119.8" cy="1827.5" r="3.6"/><circle cx="128.3" cy="1827.5" r="3.6"/><circle cx="136.7" cy="1827.5" r="3.6"/><circle cx="153.6" cy="1827.5" r="3.6"/><circle cx="162.1" cy="1827.5" r="3.6"/><circle cx="246.6" cy="1827.5" r="3.6"/><circle cx="280.4" cy="1827.5" r="3.6"/><circle cx="288.8" cy="1827.5" r="3.6"/><circle cx="297.3" cy="1827.5" r="3.6"/><circle cx="305.7" cy="1827.5" r="3.6"/><circle cx="314.2" cy="1827.5" r="3.6"/><circle cx="322.6" cy="1827.5" r="3.6"/><circle cx="331.1" cy="1827.5" r="3.6"/><circle cx="52.2" cy="1836.0" r="3.6"/><circle cx="69.1" cy="1836.0" r="3.6"/><circle cx="77.6" cy="1836.0" r="3.6"/><circle cx="86.0" cy="1836.0" r="3.6"/><circle cx="94.5" cy="1836.0" r="3.6"/><circle cx="102.9" cy="1836.0" r="3.6"/><circle cx="119.8" cy="1836.0" r="3.6"/><circle cx="136.7" cy="1836.0" r="3.6"/><circle cx="145.2" cy="1836.0" r="3.6"/><circle cx="153.6" cy="1836.0" r="3.6"/><circle cx="162.1" cy="1836.0" r="3.6"/><circle cx="246.6" cy="1836.0" r="3.6"/><circle cx="255.0" cy="1836.0" r="3.6"/><circle cx="263.5" cy="1836.0" r="3.6"/><circle cx="271.9" cy="1836.0" r="3.6"/><circle cx="331.1" cy="1836.0" r="3.6"/><circle cx="339.5" cy="1836.0" r="3.6"/><circle cx="356.4" cy="1836.0" r="3.6"/><circle cx="69.1" cy="1844.4" r="3.6"/><circle cx="119.8" cy="1844.4" r="3.6"/><circle cx="280.4" cy="1844.4" r="3.6"/><circle cx="288.8" cy="1844.4" r="3.6"/><circle cx="297.3" cy="1844.4" r="3.6"/><circle cx="305.7" cy="1844.4" r="3.6"/><circle cx="314.2" cy="1844.4" r="3.6"/><circle cx="52.2" cy="1852.9" r="3.6"/><circle cx="60.7" cy="1852.9" r="3.6"/><circle cx="111.4" cy="1852.9" r="3.6"/><circle cx="128.3" cy="1852.9" r="3.6"/><circle cx="136.7" cy="1852.9" r="3.6"/><circle cx="145.2" cy="1852.9" r="3.6"/><circle cx="162.1" cy="1852.9" r="3.6"/><circle cx="263.5" cy="1852.9" r="3.6"/><circle cx="271.9" cy="1852.9" r="3.6"/><circle cx="280.4" cy="1852.9" r="3.6"/><circle cx="322.6" cy="1852.9" r="3.6"/><circle cx="331.1" cy="1852.9" r="3.6"/><circle cx="339.5" cy="1852.9" r="3.6"/><circle cx="356.4" cy="1852.9" r="3.6"/><circle cx="60.7" cy="1861.3" r="3.6"/><circle cx="69.1" cy="1861.3" r="3.6"/><circle cx="77.6" cy="1861.3" r="3.6"/><circle cx="111.4" cy="1861.3" r="3.6"/><circle cx="128.3" cy="1861.3" r="3.6"/><circle cx="136.7" cy="1861.3" r="3.6"/><circle cx="145.2" cy="1861.3" r="3.6"/><circle cx="162.1" cy="1861.3" r="3.6"/><circle cx="263.5" cy="1861.3" r="3.6"/><circle cx="271.9" cy="1861.3" r="3.6"/><circle cx="297.3" cy="1861.3" r="3.6"/><circle cx="305.7" cy="1861.3" r="3.6"/><circle cx="314.2" cy="1861.3" r="3.6"/><circle cx="331.1" cy="1861.3" r="3.6"/><circle cx="348.0" cy="1861.3" r="3.6"/><circle cx="60.7" cy="1869.8" r="3.6"/><circle cx="102.9" cy="1869.8" r="3.6"/><circle cx="119.8" cy="1869.8" r="3.6"/><circle cx="128.3" cy="1869.8" r="3.6"/><circle cx="136.7" cy="1869.8" r="3.6"/><circle cx="145.2" cy="1869.8" r="3.6"/><circle cx="153.6" cy="1869.8" r="3.6"/><circle cx="162.1" cy="1869.8" r="3.6"/><circle cx="246.6" cy="1869.8" r="3.6"/><circle cx="255.0" cy="1869.8" r="3.6"/><circle cx="263.5" cy="1869.8" r="3.6"/><circle cx="280.4" cy="1869.8" r="3.6"/><circle cx="305.7" cy="1869.8" r="3.6"/><circle cx="339.5" cy="1869.8" r="3.6"/><circle cx="348.0" cy="1869.8" r="3.6"/><circle cx="356.4" cy="1869.8" r="3.6"/><circle cx="69.1" cy="1878.2" r="3.6"/><circle cx="77.6" cy="1878.2" r="3.6"/><circle cx="86.0" cy="1878.2" r="3.6"/><circle cx="94.5" cy="1878.2" r="3.6"/><circle cx="102.9" cy="1878.2" r="3.6"/><circle cx="119.8" cy="1878.2" r="3.6"/><circle cx="136.7" cy="1878.2" r="3.6"/><circle cx="145.2" cy="1878.2" r="3.6"/><circle cx="162.1" cy="1878.2" r="3.6"/><circle cx="246.6" cy="1878.2" r="3.6"/><circle cx="322.6" cy="1878.2" r="3.6"/><circle cx="339.5" cy="1878.2" r="3.6"/><circle cx="52.2" cy="1886.7" r="3.6"/><circle cx="60.7" cy="1886.7" r="3.6"/><circle cx="77.6" cy="1886.7" r="3.6"/><circle cx="86.0" cy="1886.7" r="3.6"/><circle cx="94.5" cy="1886.7" r="3.6"/><circle cx="102.9" cy="1886.7" r="3.6"/><circle cx="128.3" cy="1886.7" r="3.6"/><circle cx="145.2" cy="1886.7" r="3.6"/><circle cx="162.1" cy="1886.7" r="3.6"/><circle cx="246.6" cy="1886.7" r="3.6"/><circle cx="255.0" cy="1886.7" r="3.6"/><circle cx="263.5" cy="1886.7" r="3.6"/><circle cx="280.4" cy="1886.7" r="3.6"/><circle cx="288.8" cy="1886.7" r="3.6"/><circle cx="314.2" cy="1886.7" r="3.6"/><circle cx="322.6" cy="1886.7" r="3.6"/><circle cx="331.1" cy="1886.7" r="3.6"/><circle cx="339.5" cy="1886.7" r="3.6"/><circle cx="348.0" cy="1886.7" r="3.6"/><circle cx="356.4" cy="1886.7" r="3.6"/><circle cx="52.2" cy="1895.1" r="3.6"/><circle cx="60.7" cy="1895.1" r="3.6"/><circle cx="94.5" cy="1895.1" r="3.6"/><circle cx="102.9" cy="1895.1" r="3.6"/><circle cx="119.8" cy="1895.1" r="3.6"/><circle cx="128.3" cy="1895.1" r="3.6"/><circle cx="136.7" cy="1895.1" r="3.6"/><circle cx="145.2" cy="1895.1" r="3.6"/><circle cx="162.1" cy="1895.1" r="3.6"/><circle cx="271.9" cy="1895.1" r="3.6"/><circle cx="280.4" cy="1895.1" r="3.6"/><circle cx="288.8" cy="1895.1" r="3.6"/><circle cx="297.3" cy="1895.1" r="3.6"/><circle cx="305.7" cy="1895.1" r="3.6"/><circle cx="339.5" cy="1895.1" r="3.6"/><circle cx="348.0" cy="1895.1" r="3.6"/><circle cx="60.7" cy="1903.6" r="3.6"/><circle cx="77.6" cy="1903.6" r="3.6"/><circle cx="86.0" cy="1903.6" r="3.6"/><circle cx="128.3" cy="1903.6" r="3.6"/><circle cx="136.7" cy="1903.6" r="3.6"/><circle cx="145.2" cy="1903.6" r="3.6"/><circle cx="204.3" cy="1903.6" r="3.6"/><circle cx="221.2" cy="1903.6" r="3.6"/><circle cx="238.1" cy="1903.6" r="3.6"/><circle cx="263.5" cy="1903.6" r="3.6"/><circle cx="271.9" cy="1903.6" r="3.6"/><circle cx="280.4" cy="1903.6" r="3.6"/><circle cx="305.7" cy="1903.6" r="3.6"/><circle cx="314.2" cy="1903.6" r="3.6"/><circle cx="339.5" cy="1903.6" r="3.6"/><circle cx="348.0" cy="1903.6" r="3.6"/><circle cx="52.2" cy="1912.0" r="3.6"/><circle cx="60.7" cy="1912.0" r="3.6"/><circle cx="69.1" cy="1912.0" r="3.6"/><circle cx="102.9" cy="1912.0" r="3.6"/><circle cx="111.4" cy="1912.0" r="3.6"/><circle cx="119.8" cy="1912.0" r="3.6"/><circle cx="145.2" cy="1912.0" r="3.6"/><circle cx="153.6" cy="1912.0" r="3.6"/><circle cx="162.1" cy="1912.0" r="3.6"/><circle cx="179.0" cy="1912.0" r="3.6"/><circle cx="187.4" cy="1912.0" r="3.6"/><circle cx="212.8" cy="1912.0" r="3.6"/><circle cx="221.2" cy="1912.0" r="3.6"/><circle cx="229.7" cy="1912.0" r="3.6"/><circle cx="238.1" cy="1912.0" r="3.6"/><circle cx="255.0" cy="1912.0" r="3.6"/><circle cx="288.8" cy="1912.0" r="3.6"/><circle cx="305.7" cy="1912.0" r="3.6"/><circle cx="322.6" cy="1912.0" r="3.6"/><circle cx="331.1" cy="1912.0" r="3.6"/><circle cx="348.0" cy="1912.0" r="3.6"/><circle cx="52.2" cy="1920.5" r="3.6"/><circle cx="60.7" cy="1920.5" r="3.6"/><circle cx="69.1" cy="1920.5" r="3.6"/><circle cx="77.6" cy="1920.5" r="3.6"/><circle cx="102.9" cy="1920.5" r="3.6"/><circle cx="111.4" cy="1920.5" r="3.6"/><circle cx="119.8" cy="1920.5" r="3.6"/><circle cx="136.7" cy="1920.5" r="3.6"/><circle cx="145.2" cy="1920.5" r="3.6"/><circle cx="153.6" cy="1920.5" r="3.6"/><circle cx="162.1" cy="1920.5" r="3.6"/><circle cx="212.8" cy="1920.5" r="3.6"/><circle cx="221.2" cy="1920.5" r="3.6"/><circle cx="246.6" cy="1920.5" r="3.6"/><circle cx="263.5" cy="1920.5" r="3.6"/><circle cx="271.9" cy="1920.5" r="3.6"/><circle cx="280.4" cy="1920.5" r="3.6"/><circle cx="288.8" cy="1920.5" r="3.6"/><circle cx="297.3" cy="1920.5" r="3.6"/><circle cx="305.7" cy="1920.5" r="3.6"/><circle cx="314.2" cy="1920.5" r="3.6"/><circle cx="331.1" cy="1920.5" r="3.6"/><circle cx="348.0" cy="1920.5" r="3.6"/><circle cx="356.4" cy="1920.5" r="3.6"/><circle cx="69.1" cy="1928.9" r="3.6"/><circle cx="77.6" cy="1928.9" r="3.6"/><circle cx="86.0" cy="1928.9" r="3.6"/><circle cx="94.5" cy="1928.9" r="3.6"/><circle cx="111.4" cy="1928.9" r="3.6"/><circle cx="119.8" cy="1928.9" r="3.6"/><circle cx="136.7" cy="1928.9" r="3.6"/><circle cx="145.2" cy="1928.9" r="3.6"/><circle cx="170.5" cy="1928.9" r="3.6"/><circle cx="179.0" cy="1928.9" r="3.6"/><circle cx="187.4" cy="1928.9" r="3.6"/><circle cx="204.3" cy="1928.9" r="3.6"/><circle cx="229.7" cy="1928.9" r="3.6"/><circle cx="238.1" cy="1928.9" r="3.6"/><circle cx="263.5" cy="1928.9" r="3.6"/><circle cx="280.4" cy="1928.9" r="3.6"/><circle cx="288.8" cy="1928.9" r="3.6"/><circle cx="297.3" cy="1928.9" r="3.6"/><circle cx="339.5" cy="1928.9" r="3.6"/><circle cx="348.0" cy="1928.9" r="3.6"/><circle cx="356.4" cy="1928.9" r="3.6"/><circle cx="69.1" cy="1937.4" r="3.6"/><circle cx="77.6" cy="1937.4" r="3.6"/><circle cx="86.0" cy="1937.4" r="3.6"/><circle cx="94.5" cy="1937.4" r="3.6"/><circle cx="111.4" cy="1937.4" r="3.6"/><circle cx="162.1" cy="1937.4" r="3.6"/><circle cx="170.5" cy="1937.4" r="3.6"/><circle cx="179.0" cy="1937.4" r="3.6"/><circle cx="195.9" cy="1937.4" r="3.6"/><circle cx="204.3" cy="1937.4" r="3.6"/><circle cx="221.2" cy="1937.4" r="3.6"/><circle cx="229.7" cy="1937.4" r="3.6"/><circle cx="238.1" cy="1937.4" r="3.6"/><circle cx="255.0" cy="1937.4" r="3.6"/><circle cx="288.8" cy="1937.4" r="3.6"/><circle cx="297.3" cy="1937.4" r="3.6"/><circle cx="305.7" cy="1937.4" r="3.6"/><circle cx="314.2" cy="1937.4" r="3.6"/><circle cx="331.1" cy="1937.4" r="3.6"/><circle cx="339.5" cy="1937.4" r="3.6"/><circle cx="348.0" cy="1937.4" r="3.6"/><circle cx="86.0" cy="1945.8" r="3.6"/><circle cx="102.9" cy="1945.8" r="3.6"/><circle cx="119.8" cy="1945.8" r="3.6"/><circle cx="136.7" cy="1945.8" r="3.6"/><circle cx="145.2" cy="1945.8" r="3.6"/><circle cx="153.6" cy="1945.8" r="3.6"/><circle cx="162.1" cy="1945.8" r="3.6"/><circle cx="187.4" cy="1945.8" r="3.6"/><circle cx="195.9" cy="1945.8" r="3.6"/><circle cx="221.2" cy="1945.8" r="3.6"/><circle cx="255.0" cy="1945.8" r="3.6"/><circle cx="263.5" cy="1945.8" r="3.6"/><circle cx="297.3" cy="1945.8" r="3.6"/><circle cx="305.7" cy="1945.8" r="3.6"/><circle cx="314.2" cy="1945.8" r="3.6"/><circle cx="322.6" cy="1945.8" r="3.6"/><circle cx="356.4" cy="1945.8" r="3.6"/><circle cx="128.3" cy="1954.3" r="3.6"/><circle cx="136.7" cy="1954.3" r="3.6"/><circle cx="162.1" cy="1954.3" r="3.6"/><circle cx="187.4" cy="1954.3" r="3.6"/><circle cx="195.9" cy="1954.3" r="3.6"/><circle cx="204.3" cy="1954.3" r="3.6"/><circle cx="212.8" cy="1954.3" r="3.6"/><circle cx="221.2" cy="1954.3" r="3.6"/><circle cx="246.6" cy="1954.3" r="3.6"/><circle cx="255.0" cy="1954.3" r="3.6"/><circle cx="263.5" cy="1954.3" r="3.6"/><circle cx="280.4" cy="1954.3" r="3.6"/><circle cx="288.8" cy="1954.3" r="3.6"/><circle cx="297.3" cy="1954.3" r="3.6"/><circle cx="322.6" cy="1954.3" r="3.6"/><circle cx="331.1" cy="1954.3" r="3.6"/><circle cx="339.5" cy="1954.3" r="3.6"/><circle cx="119.8" cy="1962.7" r="3.6"/><circle cx="128.3" cy="1962.7" r="3.6"/><circle cx="145.2" cy="1962.7" r="3.6"/><circle cx="153.6" cy="1962.7" r="3.6"/><circle cx="162.1" cy="1962.7" r="3.6"/><circle cx="179.0" cy="1962.7" r="3.6"/><circle cx="195.9" cy="1962.7" r="3.6"/><circle cx="204.3" cy="1962.7" r="3.6"/><circle cx="229.7" cy="1962.7" r="3.6"/><circle cx="238.1" cy="1962.7" r="3.6"/><circle cx="255.0" cy="1962.7" r="3.6"/><circle cx="263.5" cy="1962.7" r="3.6"/><circle cx="280.4" cy="1962.7" r="3.6"/><circle cx="297.3" cy="1962.7" r="3.6"/><circle cx="314.2" cy="1962.7" r="3.6"/><circle cx="322.6" cy="1962.7" r="3.6"/><circle cx="331.1" cy="1962.7" r="3.6"/><circle cx="119.8" cy="1971.2" r="3.6"/><circle cx="136.7" cy="1971.2" r="3.6"/><circle cx="153.6" cy="1971.2" r="3.6"/><circle cx="162.1" cy="1971.2" r="3.6"/><circle cx="187.4" cy="1971.2" r="3.6"/><circle cx="195.9" cy="1971.2" r="3.6"/><circle cx="221.2" cy="1971.2" r="3.6"/><circle cx="229.7" cy="1971.2" r="3.6"/><circle cx="255.0" cy="1971.2" r="3.6"/><circle cx="263.5" cy="1971.2" r="3.6"/><circle cx="280.4" cy="1971.2" r="3.6"/><circle cx="314.2" cy="1971.2" r="3.6"/><circle cx="331.1" cy="1971.2" r="3.6"/><circle cx="339.5" cy="1971.2" r="3.6"/><circle cx="119.8" cy="1979.6" r="3.6"/><circle cx="128.3" cy="1979.6" r="3.6"/><circle cx="136.7" cy="1979.6" r="3.6"/><circle cx="153.6" cy="1979.6" r="3.6"/><circle cx="162.1" cy="1979.6" r="3.6"/><circle cx="170.5" cy="1979.6" r="3.6"/><circle cx="195.9" cy="1979.6" r="3.6"/><circle cx="221.2" cy="1979.6" r="3.6"/><circle cx="238.1" cy="1979.6" r="3.6"/><circle cx="271.9" cy="1979.6" r="3.6"/><circle cx="280.4" cy="1979.6" r="3.6"/><circle cx="297.3" cy="1979.6" r="3.6"/><circle cx="314.2" cy="1979.6" r="3.6"/><circle cx="322.6" cy="1979.6" r="3.6"/><circle cx="331.1" cy="1979.6" r="3.6"/><circle cx="348.0" cy="1979.6" r="3.6"/><circle cx="356.4" cy="1979.6" r="3.6"/><circle cx="136.7" cy="1988.1" r="3.6"/><circle cx="145.2" cy="1988.1" r="3.6"/><circle cx="153.6" cy="1988.1" r="3.6"/><circle cx="162.1" cy="1988.1" r="3.6"/><circle cx="170.5" cy="1988.1" r="3.6"/><circle cx="179.0" cy="1988.1" r="3.6"/><circle cx="187.4" cy="1988.1" r="3.6"/><circle cx="195.9" cy="1988.1" r="3.6"/><circle cx="212.8" cy="1988.1" r="3.6"/><circle cx="229.7" cy="1988.1" r="3.6"/><circle cx="263.5" cy="1988.1" r="3.6"/><circle cx="280.4" cy="1988.1" r="3.6"/><circle cx="297.3" cy="1988.1" r="3.6"/><circle cx="339.5" cy="1988.1" r="3.6"/><circle cx="356.4" cy="1988.1" r="3.6"/><circle cx="136.7" cy="1996.5" r="3.6"/><circle cx="162.1" cy="1996.5" r="3.6"/><circle cx="170.5" cy="1996.5" r="3.6"/><circle cx="187.4" cy="1996.5" r="3.6"/><circle cx="204.3" cy="1996.5" r="3.6"/><circle cx="221.2" cy="1996.5" r="3.6"/><circle cx="246.6" cy="1996.5" r="3.6"/><circle cx="255.0" cy="1996.5" r="3.6"/><circle cx="271.9" cy="1996.5" r="3.6"/><circle cx="280.4" cy="1996.5" r="3.6"/><circle cx="288.8" cy="1996.5" r="3.6"/><circle cx="297.3" cy="1996.5" r="3.6"/><circle cx="331.1" cy="1996.5" r="3.6"/><circle cx="348.0" cy="1996.5" r="3.6"/><circle cx="128.3" cy="2005.0" r="3.6"/><circle cx="170.5" cy="2005.0" r="3.6"/><circle cx="195.9" cy="2005.0" r="3.6"/><circle cx="212.8" cy="2005.0" r="3.6"/><circle cx="238.1" cy="2005.0" r="3.6"/><circle cx="255.0" cy="2005.0" r="3.6"/><circle cx="263.5" cy="2005.0" r="3.6"/><circle cx="280.4" cy="2005.0" r="3.6"/><circle cx="297.3" cy="2005.0" r="3.6"/><circle cx="339.5" cy="2005.0" r="3.6"/><circle cx="348.0" cy="2005.0" r="3.6"/><circle cx="356.4" cy="2005.0" r="3.6"/><circle cx="119.8" cy="2013.4" r="3.6"/><circle cx="136.7" cy="2013.4" r="3.6"/><circle cx="162.1" cy="2013.4" r="3.6"/><circle cx="170.5" cy="2013.4" r="3.6"/><circle cx="187.4" cy="2013.4" r="3.6"/><circle cx="195.9" cy="2013.4" r="3.6"/><circle cx="204.3" cy="2013.4" r="3.6"/><circle cx="212.8" cy="2013.4" r="3.6"/><circle cx="221.2" cy="2013.4" r="3.6"/><circle cx="229.7" cy="2013.4" r="3.6"/><circle cx="255.0" cy="2013.4" r="3.6"/><circle cx="271.9" cy="2013.4" r="3.6"/><circle cx="280.4" cy="2013.4" r="3.6"/><circle cx="297.3" cy="2013.4" r="3.6"/><circle cx="305.7" cy="2013.4" r="3.6"/><circle cx="314.2" cy="2013.4" r="3.6"/><circle cx="348.0" cy="2013.4" r="3.6"/><circle cx="356.4" cy="2013.4" r="3.6"/></g>
<ellipse cx="196.325" cy="1855.325" rx="20" ry="17" fill="#e6f7e6"/><circle cx="189.325" cy="1851.325" r="2" fill="#5fae74"/><circle cx="201.325" cy="1851.325" r="2" fill="#5fae74"/><ellipse cx="214.325" cy="1870.325" rx="17" ry="14" fill="#e6f7e6" stroke="#5fae74" stroke-width="2"/><circle cx="208.325" cy="1867.325" r="1.8" fill="#5fae74"/><circle cx="219.325" cy="1867.325" r="1.8" fill="#5fae74"/>
<text x="80" y="2073" font-family="Liberation Sans" font-size="14" fill="#9fd4aa" opacity=".8">扫一扫上面的二维码图案，加我为朋友。</text>
</svg>

<!-- editor -->
<div id="gutter" class="a"></div>
<div id="code" class="a"></div>
<div class="a" style="left:1280px;top:952px;width:108px;height:48px;background:#2a2a2c"></div>
<div class="a" style="left:1388px;top:952px;width:2196px;height:48px;background:#1b1a1e"></div>

<div class="a" style="left:1438px;top:952px;width:24px;height:49px;border:1px solid #4a4a4e;border-radius:3px"></div>
<div class="a" style="left:1372px;top:154px;width:0;height:0;border-left:5px solid transparent;border-right:5px solid transparent;border-top:7px solid #4a4a4c"></div>
<div class="ln" style="top:134px">1</div><div class="cl" style="top:134px"><span class="k">def</span> go():</div>
<div class="ln" style="top:182px">2</div><div class="cl" style="top:182px">    Dev.<span class="m">step</span>(<span class="n">-5</span>)</div>
<div class="ln" style="top:230px">3</div><div class="cl" style="top:230px">    Dev.<span class="m">step</span>(<span class="n">5</span>)</div>
<div class="ln" style="top:278px">4</div><div class="cl" style="top:278px"></div>
<div class="ln" style="top:326px">5</div><div class="cl" style="top:326px">go()</div>
<div class="ln" style="top:374px">6</div><div class="cl" style="top:374px">Spaceship.<span class="m">step</span>(<span class="n">2</span>)</div>
<div class="ln" style="top:422px">7</div><div class="cl" style="top:422px">go()</div>
<div class="ln" style="top:470px">8</div><div class="cl" style="top:470px">Spaceship.<span class="m">step</span>(<span class="n">3</span>)</div>
<div class="ln" style="top:518px">9</div><div class="cl" style="top:518px">Spaceship.<span class="m">turnLeft</span>()</div>
<div class="ln" style="top:566px">10</div><div class="cl" style="top:566px">Spaceship.<span class="m">step</span>(<span class="n">1</span>)</div>
<div class="ln" style="top:614px">11</div><div class="cl" style="top:614px">go()</div>
<div class="ln" style="top:662px">12</div><div class="cl" style="top:662px">Spaceship.<span class="m">turnRight</span>()</div>
<div class="ln" style="top:710px">13</div><div class="cl" style="top:710px">Spaceship.<span class="m">step</span>(<span class="n">2</span>)</div>
<div class="ln" style="top:758px">14</div><div class="cl" style="top:758px">go()</div>
<div class="ln" style="top:806px">15</div><div class="cl" style="top:806px">Spaceship.<span class="m">step</span>(<span class="n">4</span>)</div>
<div class="ln" style="top:854px">16</div><div class="cl" style="top:854px">Spaceship.<span class="m">turnLeft</span>()</div>
<div class="ln" style="top:902px">17</div><div class="cl" style="top:902px">Spaceship.<span class="m">step</span>(<span class="n">1</span>)</div>
<div class="ln" style="top:950px">18</div><div class="cl" style="top:950px">go()</div>

<!-- help circles -->
<svg class="a" style="left:3470px;top:1514px" width="90" height="190" viewBox="3470 1514 90 190">
<defs><radialGradient id="org" cx=".4" cy=".35" r=".7"><stop offset="0" stop-color="#e8b070"/><stop offset=".6" stop-color="#d89a4c"/><stop offset="1" stop-color="#c08030"/></radialGradient></defs>
<circle cx="3513" cy="1557" r="35" fill="url(#org)"/>
<text x="3513" y="1577" text-anchor="middle" font-family="Liberation Sans" font-weight="bold" font-size="48" fill="#f4c890" opacity=".8">?</text>
<circle cx="3513" cy="1657" r="35" fill="url(#org)"/>
<path d="M3497 1677 L3529 1677 L3524 1668 L3524 1652 Q3524 1638 3513 1636 Q3502 1638 3502 1652 L3502 1668 Z" fill="none" stroke="#f8d0a0" stroke-width="4" opacity=".8"/>
<path d="M3495 1640 L3531 1674" stroke="#f8d0a0" stroke-width="4" opacity=".7"/>
</svg>
<!-- toolbar -->
<div id="tb" class="a"></div>
<div class="a dot" style="left:1289px;top:1797px;width:19px;height:19px"></div>
<div class="a dot" style="left:1289px;top:2037px;width:19px;height:19px"></div>
<div class="a" style="left:1275px;top:1844px;width:15px;height:168px;background:#4f6a94;border-radius:0 10px 10px 0"></div>
<div id="tbin" class="a"></div>
<div class="card" style="left:1506px"><div class="face"><svg width="187" height="222" viewBox="0 0 187 222"><path d="M89 9 Q96 10 106 18 L123 34 Q124 37 120 37 L101 37 L101 51 L78 51 L78 37 L58 37 Q54 37 56 34 L72 18 Q82 10 89 9 Z" fill="#f39a3c"/><ellipse cx="50" cy="105" rx="28" ry="40" fill="#f39a3c"/><ellipse cx="131" cy="88" rx="28" ry="40" fill="#f39a3c"/><g stroke="#e4862e" stroke-width="2" opacity=".55"><path d="M24 90 H76 M23 105 H77 M25 120 H75"/><path d="M105 72 H157 M104 87 H158 M106 102 H156"/></g></svg><div class="lbl">step</div></div></div>
<div class="card" style="left:1722px"><div class="face"><svg width="187" height="222" viewBox="0 0 187 222"><path d="M27 80 L67 26 L67 48 L122 48 Q150 48 150 76 L150 143 L118 143 L118 90 Q118 83 111 83 L67 83 L67 112 Z" fill="#f39a3c" stroke="#e3822e" stroke-width="2"/></svg><div class="lbl">turnLeft</div></div></div>
<div class="card" style="left:1938px"><div class="face"><svg width="187" height="222" viewBox="0 0 187 222"><path d="M163 70 L121 27 L121 48 L66 48 Q38 48 38 76 L38 143 L72 143 L72 90 Q72 84 79 84 L121 84 L121 112 Z" fill="#f39a3c" stroke="#e3822e" stroke-width="2"/></svg><div class="lbl">turnRight</div></div></div>
<div class="card" style="left:2153px"><div class="face"><div class="big" style="top:28px;font-size:120px;line-height:140px;letter-spacing:-3px">for</div><div class="lbl">for</div></div></div>
<div class="card" style="left:2369px"><div class="face"><div class="big" style="top:51px;font-size:76px;line-height:100px;letter-spacing:-4px">while</div><div class="lbl">while</div></div></div>
<div class="card" style="left:2585px"><div class="face"><div class="big" style="top:51px;font-size:76px;line-height:100px;letter-spacing:-4px">func</div><div class="lbl">function</div></div></div>
<div class="card" style="left:2801px"><div class="face"><div class="big" style="top:14px;font-size:140px;line-height:160px;letter-spacing:-2px">if</div><div class="lbl">if</div></div></div>
<svg class="a" style="left:3166px;top:1899px" width="40" height="54" viewBox="0 0 40 54"><path d="M4 4 Q4 0 8 2 L36 24 Q40 27 36 30 L8 52 Q4 54 4 50 Z" fill="#a8c6f0"/></svg>
<div class="a" style="left:3221px;top:1795px;width:328px;height:268px;background:#2c3a58;border-radius:40px;box-shadow:inset 0 0 0 3px #3d4f72"></div>
<div class="brk" style="left:3255px;top:1817px;width:258px;height:110px"><div class="in"></div></div>
<div class="a" style="left:3290px;top:1842px;font-size:50px;line-height:60px;color:#cfeefe;transform:scaleX(0.82);transform-origin:left top;-webkit-text-stroke:1px #cfeefe">RUN</div>
<svg class="a" style="left:3404px;top:1848px" width="82" height="50" viewBox="0 0 82 50"><path d="M0 2 L34 25 L0 48 Z" fill="#3f7fb8"/><path d="M20 2 L54 25 L20 48 Z" fill="#559ad2"/><path d="M42 0 L80 25 L42 50 Z" fill="#7dd2f4"/></svg>
<div class="brk" style="left:3257px;top:1943px;width:116px;height:105px"><div class="in"></div></div>
<svg class="a" style="left:3276px;top:1956px" width="76" height="76" viewBox="0 0 76 76"><path d="M14 34 A24 24 0 0 1 58 24" fill="none" stroke="#ecb0f4" stroke-width="9"/><path d="M48 14 L68 12 L62 34 Z" fill="#ecb0f4"/><path d="M62 42 A24 24 0 0 1 18 52" fill="none" stroke="#ecb0f4" stroke-width="9"/><path d="M28 62 L8 64 L14 42 Z" fill="#ecb0f4"/></svg>
<div class="brk" style="left:3399px;top:1945px;width:117px;height:104px"><div class="in"></div></div>
<svg class="a" style="left:3426px;top:1967px" width="64" height="64" viewBox="0 0 64 64"><circle cx="32" cy="32" r="27" fill="none" stroke="#e9474f" stroke-width="6"/><rect x="23" y="23" width="18" height="18" fill="#e9474f"/></svg>
<div class="gap" style="left:3255px;top:1843px;height:60px;width:4px"></div><div class="gap" style="left:3509px;top:1843px;height:60px;width:4px"></div>
<div class="gap" style="left:3257px;top:1966px;height:58px;width:4px"></div><div class="gap" style="left:3369px;top:1966px;height:58px;width:4px"></div>
<div class="gap" style="left:3399px;top:1968px;height:58px;width:4px"></div><div class="gap" style="left:3512px;top:1968px;height:58px;width:4px"></div>
<div class="a dot" style="left:3558px;top:1791px;width:19px;height:19px"></div>
<div class="a dot" style="left:3558px;top:2036px;width:19px;height:19px"></div>
</body></html>
